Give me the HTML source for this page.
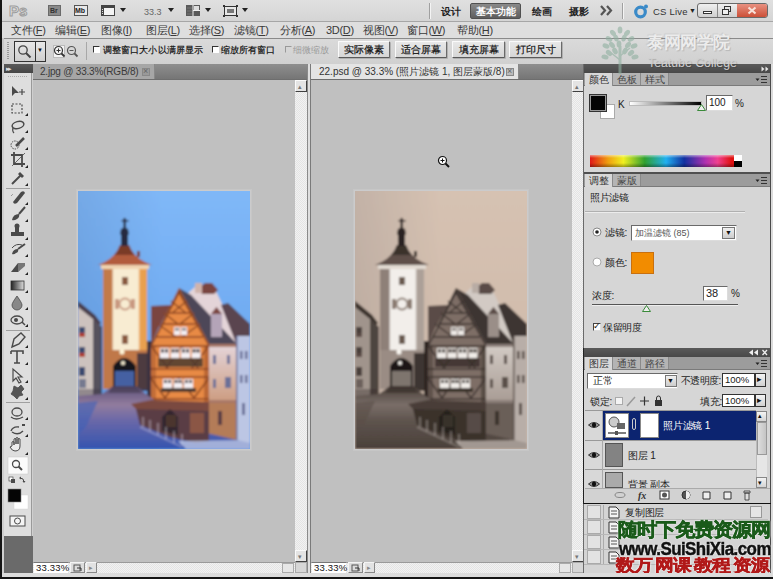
<!DOCTYPE html>
<html><head><meta charset="utf-8"><style>
*{margin:0;padding:0;box-sizing:border-box}
html,body{width:773px;height:579px;overflow:hidden;background:#c0c0c0;font-family:"Liberation Sans",sans-serif;font-size:11px;color:#1a1a1a}
.a{position:absolute}
.t{position:absolute;white-space:nowrap;line-height:12px}
.b{position:absolute;background:linear-gradient(#e8e8e8,#d6d6d6);border:1px solid #fafafa;border-right-color:#6a6a6a;border-bottom-color:#5a5a5a;box-shadow:1px 1px 0 #b0b0b0;border-radius:1px;text-align:center;font-size:10px;line-height:15px;color:#111;white-space:nowrap;-webkit-text-stroke:0.2px #111}
.tab{position:absolute;height:13px;line-height:13px;font-size:11px;text-align:center;color:#444;border-right:1px solid #8a8a8a}
.in{position:absolute;background:#fff;border:1px solid #6a6a6a;border-right-color:#dcdcdc;border-bottom-color:#dcdcdc;font-size:11px;line-height:12px;padding-left:2px;white-space:nowrap}
</style></head><body>
<div class="a" style="left:0px;top:0px;width:773px;height:22px;background:linear-gradient(#e0e0e0,#d4d4d4);"></div>
<div class="a" style="left:0px;top:21px;width:773px;height:1px;background:#a6a6a6;"></div>
<div class="t" style="left:9px;top:3px;font-size:15px;line-height:15px;color:#e2e2e2;-webkit-text-stroke:1px #9c9c9c;font-weight:bold;letter-spacing:0px">Ps</div>
<div class="a" style="left:48px;top:5px;width:13px;height:11px;background:#8a8a8a;border:1px solid #6a6a6a"></div>
<div class="t" style="left:50px;top:7px;font-size:7px;line-height:7px;color:#333;font-weight:bold">Br</div>
<div class="a" style="left:74px;top:5px;width:14px;height:11px;background:#e8e8e8;border:1px solid #555"></div>
<div class="t" style="left:75px;top:7px;font-size:7px;line-height:7px;color:#222;font-weight:bold">Mb</div>
<svg class="a" style="left:100px;top:5px" width="150" height="12" viewBox="100 5 150 12"><rect x="101.5" y="5.5" width="13" height="10" fill="#f4f4f4" stroke="#444"/><rect x="101" y="5" width="14" height="3" fill="#444"/><rect x="101" y="5" width="3" height="11" fill="#444"/><path d="M102 9.5h1M102 11.5h1M102 13.5h1" stroke="#ddd"/><path d="M120 8h6l-3 4z" fill="#222"/><path d="M168 8h6l-3 4z" fill="#222"/><rect x="186" y="5" width="14" height="11" fill="#5a5a5a"/><path d="M193 5v11M193 10.5h7" stroke="#f0f0f0"/><rect x="194" y="6" width="5" height="4" fill="#ddd"/><path d="M187 8h5M187 11h5M187 14h5" stroke="#888" stroke-width="0.6"/><path d="M205 8h6l-3 4z" fill="#222"/><rect x="224.5" y="6.5" width="12" height="9" fill="#e8e8e8" stroke="#333"/><rect x="227" y="9" width="7" height="4" fill="#777"/><path d="M223 5h2v2h-2zM236 5h2v2h-2zM223 15h2v2h-2zM236 15h2v2h-2z" fill="#333"/><path d="M242 8h6l-3 4z" fill="#222"/></svg>
<div class="t" style="left:144px;top:6px;font-size:9px;color:#666">33.3</div>
<div class="a" style="left:429px;top:3px;width:1px;height:16px;background:#a0a0a0;"></div>
<div class="a" style="left:430px;top:3px;width:1px;height:16px;background:#f4f4f4;"></div>
<div class="t" style="left:441px;top:6px;font-size:9.5px;font-weight:bold;color:#222">设计</div>
<div class="a" style="left:470px;top:3px;width:51px;height:16px;background:linear-gradient(#8a8a8a,#5e5e5e);border-radius:2px;border:1px solid #505050"></div>
<div class="t" style="left:476px;top:6px;font-size:9.5px;color:#fff;font-weight:bold">基本功能</div>
<div class="t" style="left:532px;top:6px;font-size:9.5px;font-weight:bold;color:#222">绘画</div>
<div class="t" style="left:569px;top:6px;font-size:9.5px;font-weight:bold;color:#222">摄影</div>
<svg class="a" style="left:600px;top:5px" width="13" height="11"><path d="M1 1 L5 5.5 L1 10 M7 1 L11 5.5 L7 10" fill="none" stroke="#555" stroke-width="2.2"/></svg>
<div class="a" style="left:622px;top:3px;width:1px;height:16px;background:#a0a0a0;"></div>
<div class="a" style="left:623px;top:3px;width:1px;height:16px;background:#f4f4f4;"></div>
<svg class="a" style="left:633px;top:3px" width="17" height="16" viewBox="0 0 17 16"><circle cx="7.5" cy="9" r="4.8" fill="none" stroke="#3a8ac8" stroke-width="3.2"/><circle cx="13" cy="3.5" r="2" fill="#3a8ac8"/></svg>
<div class="t" style="left:653px;top:6px;font-size:9.5px;color:#333;letter-spacing:0.2px">CS Live</div>
<div class="t" style="left:689px;top:7px;font-size:7px;line-height:8px;color:#222">&#9660;</div>
<div class="a" style="left:697px;top:3px;width:71px;height:15px;background:linear-gradient(#f0f0f0,#cfcfcf);border:1px solid #6a6a6a;border-radius:3px"></div>
<div class="a" style="left:717px;top:4px;width:1px;height:13px;background:#888;"></div>
<div class="a" style="left:737px;top:4px;width:1px;height:13px;background:#888;"></div>
<div class="a" style="left:737px;top:4px;width:30px;height:13px;background:linear-gradient(#e89080,#cc5038);border-radius:0 2px 2px 0"></div>
<div class="a" style="left:703px;top:11px;width:9px;height:3px;background:#fff;border:1px solid #333"></div>
<div class="a" style="left:724px;top:6px;width:7px;height:6px;background:none;border:1px solid #333"></div>
<div class="a" style="left:722px;top:9px;width:7px;height:6px;background:#eee;border:1px solid #333"></div>
<svg class="a" style="left:747px;top:6px" width="10" height="9"><path d="M1.5 1.5 L8.5 7.5 M8.5 1.5 L1.5 7.5" stroke="#f8e0d8" stroke-width="2.2"/></svg>
<div class="a" style="left:0px;top:22px;width:773px;height:17px;background:#dedede;"></div>
<div class="a" style="left:0px;top:38px;width:773px;height:1px;background:#8a8a8a;"></div>
<div class="t" style="left:11px;top:24px;font-size:11px;color:#3a3a3a;letter-spacing:-0.3px">文件(<u>F</u>)</div>
<div class="t" style="left:55px;top:24px;font-size:11px;color:#3a3a3a;letter-spacing:-0.3px">编辑(<u>E</u>)</div>
<div class="t" style="left:101px;top:24px;font-size:11px;color:#3a3a3a;letter-spacing:-0.3px">图像(<u>I</u>)</div>
<div class="t" style="left:146px;top:24px;font-size:11px;color:#3a3a3a;letter-spacing:-0.3px">图层(<u>L</u>)</div>
<div class="t" style="left:189px;top:24px;font-size:11px;color:#3a3a3a;letter-spacing:-0.3px">选择(<u>S</u>)</div>
<div class="t" style="left:234px;top:24px;font-size:11px;color:#3a3a3a;letter-spacing:-0.3px">滤镜(<u>T</u>)</div>
<div class="t" style="left:280px;top:24px;font-size:11px;color:#3a3a3a;letter-spacing:-0.3px">分析(<u>A</u>)</div>
<div class="t" style="left:326px;top:24px;font-size:11px;color:#3a3a3a;letter-spacing:-0.3px">3D(<u>D</u>)</div>
<div class="t" style="left:363px;top:24px;font-size:11px;color:#3a3a3a;letter-spacing:-0.3px">视图(<u>V</u>)</div>
<div class="t" style="left:407px;top:24px;font-size:11px;color:#3a3a3a;letter-spacing:-0.3px">窗口(<u>W</u>)</div>
<div class="t" style="left:457px;top:24px;font-size:11px;color:#3a3a3a;letter-spacing:-0.3px">帮助(<u>H</u>)</div>
<div class="a" style="left:0px;top:39px;width:773px;height:25px;background:linear-gradient(#dadada,#d0d0d0);"></div>
<div class="a" style="left:7px;top:42px;width:2px;height:18px;background:repeating-linear-gradient(#999 0 1px,transparent 1px 2px);"></div>
<div class="a" style="left:14px;top:41px;width:32px;height:21px;background:linear-gradient(#e8e8e8,#cfcfcf);border:1px solid #333"></div>
<div class="a" style="left:35px;top:41px;width:1px;height:21px;background:#333;"></div>
<svg class="a" style="left:17px;top:44px" width="15" height="15" viewBox="0 0 15 15"><circle cx="6" cy="6" r="4.2" fill="none" stroke="#444" stroke-width="1.3"/><line x1="9" y1="9" x2="13.5" y2="13.5" stroke="#444" stroke-width="2"/></svg>
<div class="t" style="left:37px;top:47px;font-size:6px;line-height:6px;color:#111">&#9660;</div>
<div class="a" style="left:86px;top:42px;width:1px;height:18px;background:#a8a8a8;"></div>
<div class="a" style="left:53px;top:45px;width:12px;height:13px;background:#f4f4f4;border:1px solid #bbb"></div>
<svg class="a" style="left:53px;top:45px" width="26" height="14" viewBox="0 0 26 14"><circle cx="5.5" cy="5.5" r="4" fill="none" stroke="#333" stroke-width="1.2"/><line x1="8.5" y1="8.5" x2="11.5" y2="11.5" stroke="#333" stroke-width="1.8"/><path d="M3.5 5.5h4M5.5 3.5v4" stroke="#333"/><circle cx="18.5" cy="5.5" r="4" fill="none" stroke="#555" stroke-width="1.2"/><line x1="21.5" y1="8.5" x2="24.5" y2="11.5" stroke="#555" stroke-width="1.8"/><path d="M16.5 5.5h4" stroke="#555"/></svg>
<div class="a" style="left:93px;top:46px;width:7px;height:7px;background:#fff;border:1px solid #333;border-right-color:transparent;border-bottom-color:transparent"></div>
<div class="t" style="left:103px;top:45px;font-size:9px;line-height:10px;color:#111;letter-spacing:0.1px;-webkit-text-stroke:0.2px #111">调整窗口大小以满屏显示</div>
<div class="a" style="left:212px;top:46px;width:7px;height:7px;background:#fff;border:1px solid #333;border-right-color:transparent;border-bottom-color:transparent"></div>
<div class="t" style="left:221px;top:45px;font-size:9px;line-height:10px;color:#111;letter-spacing:0.1px;-webkit-text-stroke:0.2px #111">缩放所有窗口</div>
<div class="a" style="left:285px;top:46px;width:7px;height:7px;background:transparent;border:1px solid #999;border-right-color:transparent;border-bottom-color:transparent"></div>
<div class="t" style="left:293px;top:45px;font-size:9px;line-height:10px;color:#9a9a9a;letter-spacing:0.1px">细微缩放</div>
<div class="b" style="left:338px;top:41px;width:52px;height:17px;">实际像素</div>
<div class="b" style="left:395px;top:41px;width:52px;height:17px;">适合屏幕</div>
<div class="b" style="left:452px;top:41px;width:53px;height:17px;">填充屏幕</div>
<div class="b" style="left:509px;top:41px;width:53px;height:17px;">打印尺寸</div>
<div class="a" style="left:0px;top:0px;width:2px;height:579px;background:#151515;"></div>
<div class="a" style="left:2px;top:38px;width:2px;height:538px;background:#c8c8c8;"></div>
<div class="a" style="left:2px;top:64px;width:31px;height:512px;background:#cfcfcf;"></div>
<div class="a" style="left:4px;top:64px;width:29px;height:9px;background:linear-gradient(#5a5a5a,#454545);"></div>
<div class="t" style="left:6px;top:65px;font-size:7px;line-height:7px;color:#ddd;letter-spacing:-2px">&#9656;&#9656;</div>
<div class="a" style="left:4px;top:73px;width:28px;height:463px;background:#dedede;border-right:1px solid #9a9a9a"></div>
<div class="a" style="left:8px;top:76px;width:20px;height:1px;background:repeating-linear-gradient(90deg,#aaa 0 1px,transparent 1px 2px);"></div>
<div class="a" style="left:4px;top:536px;width:29px;height:37px;background:#6a6a6a;"></div>
<div class="a" style="left:2px;top:573px;width:771px;height:4px;background:#dcdcdc;"></div>
<svg class="a" style="left:4px;top:73px" width="28" height="463" viewBox="4 73 28 463"><path d="M12 86 L12 96 L15 93 L19 93Z" fill="#4a4a4a"/><path d="M19 92h6M22 89v6" stroke="#4a4a4a" stroke-width="1.2"/><rect x="12" y="104" width="10" height="9" fill="none" stroke="#4a4a4a" stroke-width="1.2" stroke-dasharray="2 1.5"/><path d="M25 116 l3 0 l0 -3z" fill="#222"/><ellipse cx="18" cy="125" rx="6" ry="3.5" fill="none" stroke="#4a4a4a" stroke-width="1.5" transform="rotate(-15 18 125)"/><path d="M13 128 q-1 3 1 5" stroke="#4a4a4a" stroke-width="1.2" fill="none"/><path d="M25 133 l3 0 l0 -3z" fill="#222"/><circle cx="15" cy="145" r="4" fill="none" stroke="#4a4a4a" stroke-width="1" stroke-dasharray="1.5 1"/><path d="M16 146 L24 138" stroke="#4a4a4a" stroke-width="2.5"/><path d="M25 150 l3 0 l0 -3z" fill="#222"/><path d="M14 152 v12 h11 M11 155 h11 v12" fill="none" stroke="#4a4a4a" stroke-width="1.8"/><path d="M12 166 L25 153" stroke="#4a4a4a" stroke-width="0.8"/><path d="M25 168 l3 0 l0 -3z" fill="#222"/><path d="M12 184 L21 175" stroke="#4a4a4a" stroke-width="2"/><path d="M20 172 l4 4 l-2 2 l-4 -4z" fill="#4a4a4a"/><path d="M25 186 l3 0 l0 -3z" fill="#222"/><rect x="6" y="188" width="24" height="1" fill="#a0a0a0"/><path d="M13 202 L21 192 q3 -2 4 1 L17 203 q-3 2 -4 -1z" fill="#4a4a4a"/><path d="M11 196 l2 -2" stroke="#777" stroke-dasharray="1 1"/><path d="M25 205 l3 0 l0 -3z" fill="#222"/><path d="M19 214 L25 207" stroke="#4a4a4a" stroke-width="2"/><path d="M12 220 q1 -6 7 -6 q1 3 -2 5 q-3 2 -5 1z" fill="#4a4a4a"/><path d="M25 222 l3 0 l0 -3z" fill="#222"/><rect x="15" y="226" width="4" height="6" fill="#4a4a4a"/><circle cx="17" cy="226" r="2.5" fill="#4a4a4a"/><rect x="11" y="232" width="13" height="4" fill="#4a4a4a"/><path d="M25 240 l3 0 l0 -3z" fill="#222"/><path d="M12 254 q1 -5 6 -5 q1 3 -2 4 q-2 2 -4 1z" fill="#4a4a4a"/><path d="M18 249 L25 244" stroke="#4a4a4a" stroke-width="2"/><path d="M12 248 q4 -5 10 -3" stroke="#4a4a4a" fill="none"/><path d="M25 257 l3 0 l0 -3z" fill="#222"/><path d="M11 272 L18 263 L25 263 L18 272Z" fill="#4a4a4a"/><path d="M18 263 L25 263 L25 266 L18 272" fill="#777"/><path d="M25 275 l3 0 l0 -3z" fill="#222"/><defs><linearGradient id="tg" x1="0" x2="1"><stop offset="0" stop-color="#222"/><stop offset="1" stop-color="#ddd"/></linearGradient></defs><rect x="11" y="281" width="13" height="9" fill="url(#tg)" stroke="#333" stroke-width="0.8"/><path d="M25 293 l3 0 l0 -3z" fill="#222"/><path d="M17 296 q-5 7 -5 9 a5 5 0 0 0 10 0 q0 -2 -5 -9z" fill="#888" stroke="#4a4a4a" stroke-width="0.8"/><path d="M25 310 l3 0 l0 -3z" fill="#222"/><ellipse cx="17" cy="320" rx="6" ry="4" fill="none" stroke="#4a4a4a" stroke-width="1.3"/><circle cx="16" cy="320" r="2" fill="#4a4a4a"/><path d="M22 322 l3 3" stroke="#4a4a4a" stroke-width="1.5"/><path d="M25 327 l3 0 l0 -3z" fill="#222"/><rect x="6" y="330" width="24" height="1" fill="#a0a0a0"/><path d="M12 347 L14 339 L21 333 L25 337 L19 344Z" fill="none" stroke="#4a4a4a" stroke-width="1.4"/><path d="M25 348 l3 0 l0 -3z" fill="#222"/><path d="M11 351 h12 v3 M17 351 v12 M14 363 h6 M11 351 v3" fill="none" stroke="#4a4a4a" stroke-width="1.6"/><path d="M25 365 l3 0 l0 -3z" fill="#222"/><path d="M13 369 L13 381 L16 378 L19 383 L21 382 L18 377 L22 377Z" fill="none" stroke="#4a4a4a" stroke-width="1.2"/><path d="M25 383 l3 0 l0 -3z" fill="#222"/><path d="M14 386 l4 2 l3 -3 l3 4 l-3 3 l2 3 l-4 1 l-2 3 l-3 -3 l-3 -2 l2 -3z" fill="#555" stroke="#4a4a4a" stroke-width="0.8"/><path d="M25 400 l3 0 l0 -3z" fill="#222"/><rect x="6" y="402" width="24" height="1" fill="#a0a0a0"/><ellipse cx="17" cy="412" rx="5" ry="4" fill="none" stroke="#4a4a4a" stroke-width="1.3"/><path d="M11 417 q5 4 12 0" fill="none" stroke="#4a4a4a" stroke-width="1.3"/><path d="M25 420 l3 0 l0 -3z" fill="#222"/><path d="M11 431 q2 -5 8 -4 M12 432 q6 4 11 -1" fill="none" stroke="#4a4a4a" stroke-width="1.4"/><rect x="22" y="424" width="3" height="2" fill="#4a4a4a"/><path d="M25 437 l3 0 l0 -3z" fill="#222"/><path d="M12 446 v-4 q1 -1 2 0 v3 v-6 q1 -1 2 0 v5 v-6 q1 -1 2 0 v6 v-5 q1 -1 2 0 v7 q0 5 -5 5 q-3 0 -5 -4z" fill="#eee" stroke="#4a4a4a" stroke-width="1"/><path d="M25 455 l3 0 l0 -3z" fill="#222"/><rect x="8" y="457" width="20" height="17" fill="#fbfbfb" stroke="#c8c8c8" stroke-width="0.5"/><circle cx="16" cy="464" r="3.5" fill="none" stroke="#4a4a4a" stroke-width="1.3"/><path d="M18.5 466.5 L22 470" stroke="#4a4a4a" stroke-width="2"/><rect x="9" y="477" width="4" height="4" fill="#fff" stroke="#4a4a4a" stroke-width="0.7"/><rect x="11" y="479" width="4" height="4" fill="#4a4a4a"/><path d="M20 478 q4 0 4 4" fill="none" stroke="#4a4a4a" stroke-width="1"/><path d="M19 478 l2 -1.5 v3z M24 483 l-1.5 -2 h3z" fill="#4a4a4a"/><rect x="14" y="495" width="14" height="14" fill="#fff" stroke="#d8d8d8" stroke-width="0.5"/><rect x="8" y="489" width="13" height="13" fill="#050505" stroke="#888" stroke-width="0.6"/><rect x="10" y="516" width="15" height="10" fill="#f4f4f4" stroke="#4a4a4a" stroke-width="1"/><circle cx="17.5" cy="521" r="3" fill="none" stroke="#4a4a4a" stroke-width="1"/></svg>
<div class="a" style="left:33px;top:64px;width:274px;height:16px;background:linear-gradient(#8e8e8e,#747474);"></div><div class="a" style="left:33px;top:64px;width:122px;height:16px;background:#a6a6a6;border-right:1px solid #888"></div><div class="t" style="left:40px;top:66px;font-size:10px;color:#3a3a3a;letter-spacing:-0.2px">2.jpg @ 33.3%(RGB/8)</div><div class="a" style="left:142px;top:68px;width:8px;height:8px;background:#999;border:1px solid #888"></div><div class="t" style="left:143px;top:67px;font-size:9px;line-height:9px;color:#666">&#215;</div><div class="a" style="left:33px;top:79px;width:274px;height:1px;background:#6e6e6e;"></div><div class="a" style="left:33px;top:80px;width:262px;height:482px;background:#c0c0c0;"></div><div class="a" style="left:295px;top:80px;width:12px;height:482px;background:repeating-conic-gradient(#e4e4e4 0 25%,#f2f2f2 0 50%) 0 0/2px 2px;"></div><div class="a" style="left:295px;top:80px;width:12px;height:12px;background:#e4e4e4;border:1px solid;border-color:#fafafa #404040 #404040 #fafafa"></div><div class="t" style="left:298px;top:83px;font-size:7px;line-height:7px;color:#777">&#9652;</div><div class="a" style="left:295px;top:550px;width:12px;height:12px;background:#e4e4e4;border:1px solid;border-color:#fafafa #404040 #404040 #fafafa"></div><div class="t" style="left:298px;top:553px;font-size:7px;line-height:7px;color:#777">&#9662;</div><div class="a" style="left:33px;top:562px;width:274px;height:11px;background:repeating-conic-gradient(#e4e4e4 0 25%,#f2f2f2 0 50%) 0 0/2px 2px;"></div><div class="a" style="left:33px;top:562px;width:274px;height:1px;background:#9a9a9a;"></div><div class="a" style="left:34px;top:562px;width:34px;height:11px;background:#fff;border-top:1px solid #777"></div><div class="t" style="left:36px;top:563px;font-size:9.5px;line-height:10px;color:#111;letter-spacing:0.2px">33.33%</div><div class="a" style="left:70px;top:562px;width:15px;height:11px;background:#dcdcdc;border:1px solid;border-color:#f4f4f4 #888 #888 #f4f4f4"></div><svg class="a" style="left:73px;top:564px" width="9" height="8"><rect x="1" y="1" width="6" height="6" fill="none" stroke="#555"/><path d="M4 4h4v3" stroke="#333" fill="none"/></svg><div class="a" style="left:86px;top:562px;width:11px;height:11px;background:#e2e2e2;border:1px solid;border-color:#f4f4f4 #888 #888 #f4f4f4"></div><div class="t" style="left:89px;top:564px;font-size:7px;line-height:7px;color:#888">&#9656;</div><div class="a" style="left:282px;top:563px;width:12px;height:10px;background:#e6e6e6;border:1px solid #aaa"></div><div class="a" style="left:295px;top:562px;width:12px;height:11px;background:#d6d6d6;border:1px solid #aaa"></div><div class="a" style="left:76px;top:189px;width:176px;height:262px;background:#cbcbcc;border:1px solid #c6c6c6"></div><svg class="a" style="left:78px;top:191px" width="172" height="258" viewBox="0 0 172 258"><defs>
<linearGradient id="gcolorsky" x1="0" y1="0" x2="0" y2="1"><stop offset="0" stop-color="#80b8f8"/><stop offset="1" stop-color="#62a0ec"/></linearGradient>
<linearGradient id="gcolortw" x1="0" y1="0" x2="1" y2="0"><stop offset="0" stop-color="#c27a4a"/><stop offset="0.2" stop-color="#c27a4a"/><stop offset="0.24" stop-color="#f8ecd2"/><stop offset="0.8" stop-color="#f8ecd2"/><stop offset="0.84" stop-color="#e8a050"/><stop offset="1" stop-color="#e8a050"/></linearGradient>
<linearGradient id="gcolorfac" x1="0" y1="0" x2="0" y2="1"><stop offset="0" stop-color="#e4d4d8"/><stop offset="1" stop-color="#cc9c80"/></linearGradient>
<linearGradient id="gcolorskyh" x1="0" y1="0" x2="1" y2="0"><stop offset="0" stop-color="#102040" stop-opacity="0.10"/><stop offset="0.5" stop-color="#102040" stop-opacity="0"/></linearGradient>
<linearGradient id="gcolorst" x1="0" y1="0" x2="0" y2="1"><stop offset="0" stop-color="#5a5078"/><stop offset="0.3" stop-color="#927c9e"/><stop offset="0.55" stop-color="#6a68a8"/><stop offset="1" stop-color="#3454b0"/></linearGradient>
<filter id="gcolorbl"><feGaussianBlur stdDeviation="0.9"/></filter>
</defs>
<g filter="url(#gcolorbl)">
<rect x="-2" y="-2" width="176" height="262" fill="url(#gcolorsky)"/>
<rect x="-2" y="-2" width="176" height="262" fill="url(#gcolorskyh)"/>
<path d="M0 112 L16 126 L22 134 L22 212 L0 212Z" fill="#cdc2be"/>
<path d="M15 128 L24 136 L24 212 L15 212Z" fill="#3a3444" opacity="0.8"/>
<path d="M0 110 L17 124 L23 132 L21 134 L15 128 L0 116Z" fill="#4a3c4c"/>
<rect x="1" y="136" width="6" height="9" fill="#3a4870"/><rect x="1" y="142" width="6" height="4" fill="#b04030"/>
<rect x="1" y="156" width="6" height="9" fill="#3a4870"/><rect x="1" y="162" width="6" height="4" fill="#b04030"/>
<rect x="1" y="176" width="6" height="9" fill="#3a4870"/>
<rect x="1" y="188" width="7" height="9" fill="#3a4870" opacity="0.6"/>
<rect x="0" y="198" width="22" height="14" fill="#3a3444" opacity="0.4"/>
<rect x="25" y="76" width="44" height="122" fill="url(#gcolortw)"/>
<rect x="25" y="159" width="44" height="39" fill="#c07848"/>
<rect x="59" y="162" width="14" height="38" fill="#3a3040" opacity="0.85"/>
<rect x="23" y="73" width="48" height="5" fill="#f0d4b0"/>
<path d="M42 54 L51 54 Q56 68 74 74 L20 74 Q37 68 42 54Z" fill="#b25c3c"/>
<path d="M42 54 L51 54 Q53 60 57 64 L36 64 Q40 60 42 54Z" fill="#7a3a28"/>
<path d="M43 55 L43 44 L42 43 L43 38 Q46.5 35 50 38 L51 43 L50 44 L50 55Z" fill="#262c40"/>
<rect x="45.5" y="27" width="2.5" height="11" fill="#262c40"/>
<rect x="43.5" y="29" width="7" height="1.5" fill="#262c40"/>
<rect x="59" y="60" width="3" height="6" fill="#7a3a28"/>
<rect x="44" y="86" width="6" height="8" fill="#8a5a40"/>
<rect x="37" y="108" width="4" height="10" fill="#c89880"/>
<rect x="53" y="108" width="4" height="10" fill="#c89880"/>
<circle cx="47" cy="113" r="5.5" fill="#f8ecd2" stroke="#c89880" stroke-width="1.8"/>
<rect x="44" y="144" width="6" height="9" fill="#8a5a40"/>
<path d="M35 195 L35 175 Q46 159 58 175 L58 195Z" fill="#18181e"/>
<path d="M37 195 L37 180 L56 180 L56 195Z" fill="#4a68b0" opacity="0.9"/>
<circle cx="44" cy="161" r="2.5" fill="#fff6d8"/>
<circle cx="45" cy="172" r="2" fill="#fff6d8"/>
<path d="M108 104 L118 95 L136 96 L158 142 L158 258 L128 258 L128 150Z" fill="#e4d4d8"/>
<path d="M121 97 L127 92 L134 92 L140 99 L136 103 L124 103Z" fill="#7a4440"/>
<rect x="117" y="92" width="7" height="10" fill="#d0b4ac"/>
<path d="M143 114 L150 112 L172 133 L172 152 L158 152Z" fill="#5a4450"/>
<rect x="158" y="145" width="14" height="113" fill="#bcc6e4"/>
<rect x="158" y="145" width="1.5" height="113" fill="#6a7098"/>
<rect x="162" y="160" width="2.5" height="8" fill="#6a7098"/>
<rect x="167" y="160" width="2.5" height="8" fill="#6a7098"/>
<rect x="162" y="184" width="2.5" height="8" fill="#6a7098"/>
<rect x="167" y="184" width="2.5" height="8" fill="#6a7098"/>
<rect x="164" y="212" width="3" height="12" fill="#6a7098"/>
<path d="M101 97 L113 104 L158 152 L158 157 L131 156 L131 153Z" fill="#4e4658"/>
<path d="M133 123 L138.5 116 L144 123 L144 146 L133 146Z" fill="#b4a4b8"/>
<path d="M133 123 L138.5 116 L144 123Z" fill="#7a4440"/>
<path d="M73 115 L93 114 L80 138 L73 154Z" fill="#7a4440"/>
<rect x="69" y="150" width="5" height="62" fill="#3a3040"/>
<path d="M101 97 L131 153 L131 211 L73 211 L73 154Z" fill="#e88a44"/>
<rect x="73" y="154" width="5" height="57" fill="#a85a30" opacity="0.6"/>
<rect x="126" y="154" width="5" height="57" fill="#a85a30" opacity="0.7"/>
<path d="M101 97 L131 153 L131 156 L101 103 L73 157 L73 154Z" fill="#8a4420"/>
<g stroke="#8a4420" stroke-width="1.5" fill="none">
<path d="M89 122 L113 122 M83 133 L119 133 M78 146 L125 146 M73 155 L131 155 M73 178 L131 178 M73 186 L131 186 M73 208 L131 208"/>
<path d="M93 110 L108 122 M109 110 L94 122 M86 122 L100 133 M116 122 L102 133 M80 133 L98 146 M122 133 L104 146 M74 156 L90 177 M104 156 L88 177 M104 156 L120 177 M130 156 L114 177 M73 187 L87 207 M101 187 L87 207 M101 187 L116 207 M131 187 L116 207"/>
</g>
<rect x="96" y="136" width="6" height="8" fill="#f4f0f4"/><rect x="97" y="137" width="1.5" height="2.5" fill="#4a3a3a"/><rect x="99.5" y="137" width="1.5" height="2.5" fill="#4a3a3a"/><rect x="103" y="136" width="6" height="8" fill="#f4f0f4"/><rect x="104" y="137" width="1.5" height="2.5" fill="#4a3a3a"/><rect x="106.5" y="137" width="1.5" height="2.5" fill="#4a3a3a"/><rect x="82.0" y="157" width="9" height="10" fill="#f4f0f4"/><rect x="83.0" y="158" width="3.0" height="3.5" fill="#4a3a3a"/><rect x="87.0" y="158" width="3.0" height="3.5" fill="#4a3a3a"/><rect x="92.5" y="157" width="9" height="10" fill="#f4f0f4"/><rect x="93.5" y="158" width="3.0" height="3.5" fill="#4a3a3a"/><rect x="97.5" y="158" width="3.0" height="3.5" fill="#4a3a3a"/><rect x="103.0" y="157" width="9" height="10" fill="#f4f0f4"/><rect x="104.0" y="158" width="3.0" height="3.5" fill="#4a3a3a"/><rect x="108.0" y="158" width="3.0" height="3.5" fill="#4a3a3a"/><rect x="113.5" y="157" width="9" height="10" fill="#f4f0f4"/><rect x="114.5" y="158" width="3.0" height="3.5" fill="#4a3a3a"/><rect x="118.5" y="158" width="3.0" height="3.5" fill="#4a3a3a"/>
<rect x="80" y="167" width="45" height="9" fill="#4a3a30" opacity="0.85"/>
<rect x="85.0" y="188" width="9" height="9" fill="#f4f0f4"/><rect x="86.0" y="189" width="3.0" height="3.0" fill="#4a3a3a"/><rect x="90.0" y="189" width="3.0" height="3.0" fill="#4a3a3a"/><rect x="95.5" y="188" width="9" height="9" fill="#f4f0f4"/><rect x="96.5" y="189" width="3.0" height="3.0" fill="#4a3a3a"/><rect x="100.5" y="189" width="3.0" height="3.0" fill="#4a3a3a"/><rect x="106.0" y="188" width="9" height="9" fill="#f4f0f4"/><rect x="107.0" y="189" width="3.0" height="3.0" fill="#4a3a3a"/><rect x="111.0" y="189" width="3.0" height="3.0" fill="#4a3a3a"/>
<rect x="83" y="197" width="35" height="4" fill="#4a3a30"/>
<rect x="131" y="155" width="27" height="56" fill="url(#gcolorfac)"/>
<rect x="131" y="153" width="27" height="3" fill="#a87868"/>
<rect x="135" y="164" width="3" height="9" fill="#6a7098"/>
<rect x="149" y="164" width="3" height="9" fill="#6a7098"/>
<rect x="135" y="188" width="3" height="9" fill="#6a7098"/>
<rect x="147" y="186" width="6" height="11" fill="#6a7098"/>
<rect x="131" y="209" width="27" height="3" fill="#a87868"/>
<rect x="131" y="212" width="27" height="46" fill="#b47c58"/>
<rect x="140" y="220" width="4" height="14" fill="#5a3c44"/>
<path d="M0 205 L24 203 L35 195 L58 195 L72 206 L95 222 L120 240 L172 252 L172 258 L0 258Z" fill="url(#gcolorst)"/>
<path d="M0 212 L20 210 L8 236 L0 244Z" fill="#4060b8" opacity="0.6"/>
<path d="M35 195 L58 195 L64 202 L30 202Z" fill="#3a3040" opacity="0.5"/>
<path d="M53 213 L73 209 L131 211 L131 220 L100 222 L60 220Z" fill="#7a4a40"/>
<path d="M58 218 L131 220 L131 250 L118 252 L92 246 L62 234Z" fill="#5a3c44"/>
<rect x="88" y="224" width="10" height="12" fill="#c87848" opacity="0.6"/>
<rect x="112" y="222" width="14" height="20" fill="#c87848" opacity="0.45"/>
<path d="M84 226 L92 218 L100 226 L100 244 L84 240Z" fill="#18181e" opacity="0.6"/>
<path d="M65 226v10M72 229v11M80 232v12M88 236v12M96 240v12M104 243v11" stroke="#e0d8e8" stroke-width="1.2" opacity="0.6"/>
<path d="M62 236 L104 256" stroke="#e0d8e8" stroke-width="1.5" opacity="0.35"/>
<path d="M100 250 L172 249 L172 258 L108 258Z" fill="#bcc6e4" opacity="0.8"/>
</g>
</svg>
<div class="a" style="left:307px;top:64px;width:4px;height:512px;background:#dedede;border-left:1px solid #8a8a8a;border-right:1px solid #7a7a7a"></div>
<div class="a" style="left:311px;top:64px;width:273px;height:16px;background:linear-gradient(#8e8e8e,#747474);"></div><div class="a" style="left:311px;top:64px;width:208px;height:16px;background:#e4e4e4;border-right:1px solid #888"></div><div class="t" style="left:319px;top:66px;font-size:10px;color:#333;letter-spacing:0px">22.psd @ 33.3% (照片滤镜 1, 图层蒙版/8)</div><div class="a" style="left:506px;top:68px;width:8px;height:8px;background:#bbb;border:1px solid #888"></div><div class="t" style="left:507px;top:67px;font-size:9px;line-height:9px;color:#666">&#215;</div><div class="a" style="left:311px;top:79px;width:273px;height:1px;background:#6e6e6e;"></div><div class="a" style="left:311px;top:80px;width:261px;height:482px;background:#c0c0c0;"></div><div class="a" style="left:572px;top:80px;width:12px;height:482px;background:repeating-conic-gradient(#e4e4e4 0 25%,#f2f2f2 0 50%) 0 0/2px 2px;"></div><div class="a" style="left:572px;top:80px;width:12px;height:12px;background:#e4e4e4;border:1px solid;border-color:#fafafa #404040 #404040 #fafafa"></div><div class="t" style="left:575px;top:83px;font-size:7px;line-height:7px;color:#777">&#9652;</div><div class="a" style="left:572px;top:550px;width:12px;height:12px;background:#e4e4e4;border:1px solid;border-color:#fafafa #404040 #404040 #fafafa"></div><div class="t" style="left:575px;top:553px;font-size:7px;line-height:7px;color:#777">&#9662;</div><div class="a" style="left:311px;top:562px;width:273px;height:11px;background:repeating-conic-gradient(#e4e4e4 0 25%,#f2f2f2 0 50%) 0 0/2px 2px;"></div><div class="a" style="left:311px;top:562px;width:273px;height:1px;background:#9a9a9a;"></div><div class="a" style="left:312px;top:562px;width:34px;height:11px;background:#fff;border-top:1px solid #777"></div><div class="t" style="left:314px;top:563px;font-size:9.5px;line-height:10px;color:#111;letter-spacing:0.2px">33.33%</div><div class="a" style="left:348px;top:562px;width:15px;height:11px;background:#dcdcdc;border:1px solid;border-color:#f4f4f4 #888 #888 #f4f4f4"></div><svg class="a" style="left:351px;top:564px" width="9" height="8"><rect x="1" y="1" width="6" height="6" fill="none" stroke="#555"/><path d="M4 4h4v3" stroke="#333" fill="none"/></svg><div class="a" style="left:364px;top:562px;width:11px;height:11px;background:#e2e2e2;border:1px solid;border-color:#f4f4f4 #888 #888 #f4f4f4"></div><div class="t" style="left:367px;top:564px;font-size:7px;line-height:7px;color:#888">&#9656;</div><div class="a" style="left:559px;top:563px;width:12px;height:10px;background:#e6e6e6;border:1px solid #aaa"></div><div class="a" style="left:572px;top:562px;width:12px;height:11px;background:#d6d6d6;border:1px solid #aaa"></div><div class="a" style="left:353px;top:189px;width:176px;height:262px;background:#cbcbcc;border:1px solid #c6c6c6"></div><svg class="a" style="left:355px;top:191px" width="172" height="258" viewBox="0 0 172 258"><defs>
<linearGradient id="gsepiasky" x1="0" y1="0" x2="0" y2="1"><stop offset="0" stop-color="#d6c2b2"/><stop offset="1" stop-color="#cdb8a8"/></linearGradient>
<linearGradient id="gsepiatw" x1="0" y1="0" x2="1" y2="0"><stop offset="0" stop-color="#8e8078"/><stop offset="0.2" stop-color="#8e8078"/><stop offset="0.24" stop-color="#f2eeea"/><stop offset="0.8" stop-color="#f2eeea"/><stop offset="0.84" stop-color="#aca098"/><stop offset="1" stop-color="#aca098"/></linearGradient>
<linearGradient id="gsepiafac" x1="0" y1="0" x2="0" y2="1"><stop offset="0" stop-color="#d2cac4"/><stop offset="1" stop-color="#a89c94"/></linearGradient>
<linearGradient id="gsepiaskyh" x1="0" y1="0" x2="1" y2="0"><stop offset="0" stop-color="#102040" stop-opacity="0.10"/><stop offset="0.5" stop-color="#102040" stop-opacity="0"/></linearGradient>
<linearGradient id="gsepiast" x1="0" y1="0" x2="0" y2="1"><stop offset="0" stop-color="#4a403a"/><stop offset="0.3" stop-color="#7a6e68"/><stop offset="0.55" stop-color="#5e544e"/><stop offset="1" stop-color="#4a403a"/></linearGradient>
<filter id="gsepiabl"><feGaussianBlur stdDeviation="0.9"/></filter>
</defs>
<g filter="url(#gsepiabl)">
<rect x="-2" y="-2" width="176" height="262" fill="url(#gsepiasky)"/>
<rect x="-2" y="-2" width="176" height="262" fill="url(#gsepiaskyh)"/>
<path d="M0 112 L16 126 L22 134 L22 212 L0 212Z" fill="#a0948c"/>
<path d="M15 128 L24 136 L24 212 L15 212Z" fill="#3a302c" opacity="0.8"/>
<path d="M0 110 L17 124 L23 132 L21 134 L15 128 L0 116Z" fill="#3a302c"/>
<rect x="1" y="136" width="6" height="9" fill="#4a403a"/><rect x="1" y="142" width="6" height="4" fill="#5a4a44"/>
<rect x="1" y="156" width="6" height="9" fill="#4a403a"/><rect x="1" y="162" width="6" height="4" fill="#5a4a44"/>
<rect x="1" y="176" width="6" height="9" fill="#4a403a"/>
<rect x="1" y="188" width="7" height="9" fill="#4a403a" opacity="0.6"/>
<rect x="0" y="198" width="22" height="14" fill="#3a302c" opacity="0.4"/>
<rect x="25" y="76" width="44" height="122" fill="url(#gsepiatw)"/>
<rect x="25" y="159" width="44" height="39" fill="#9a8c84"/>
<rect x="59" y="162" width="14" height="38" fill="#2e2622" opacity="0.85"/>
<rect x="23" y="73" width="48" height="5" fill="#e2dad2"/>
<path d="M42 54 L51 54 Q56 68 74 74 L20 74 Q37 68 42 54Z" fill="#5e504a"/>
<path d="M42 54 L51 54 Q53 60 57 64 L36 64 Q40 60 42 54Z" fill="#3a302c"/>
<path d="M43 55 L43 44 L42 43 L43 38 Q46.5 35 50 38 L51 43 L50 44 L50 55Z" fill="#2a2420"/>
<rect x="45.5" y="27" width="2.5" height="11" fill="#2a2420"/>
<rect x="43.5" y="29" width="7" height="1.5" fill="#2a2420"/>
<rect x="59" y="60" width="3" height="6" fill="#3a302c"/>
<rect x="44" y="86" width="6" height="8" fill="#6a5a50"/>
<rect x="37" y="108" width="4" height="10" fill="#8a7a70"/>
<rect x="53" y="108" width="4" height="10" fill="#8a7a70"/>
<circle cx="47" cy="113" r="5.5" fill="#f2eeea" stroke="#8a7a70" stroke-width="1.8"/>
<rect x="44" y="144" width="6" height="9" fill="#6a5a50"/>
<path d="M35 195 L35 175 Q46 159 58 175 L58 195Z" fill="#1c1814"/>
<path d="M37 195 L37 180 L56 180 L56 195Z" fill="#8a8078" opacity="0.9"/>
<circle cx="44" cy="161" r="2.5" fill="#fbf8f2"/>
<circle cx="45" cy="172" r="2" fill="#fbf8f2"/>
<path d="M108 104 L118 95 L136 96 L158 142 L158 258 L128 258 L128 150Z" fill="#d2cac4"/>
<path d="M121 97 L127 92 L134 92 L140 99 L136 103 L124 103Z" fill="#5a4c46"/>
<rect x="117" y="92" width="7" height="10" fill="#b8aca4"/>
<path d="M143 114 L150 112 L172 133 L172 152 L158 152Z" fill="#3e3430"/>
<rect x="158" y="145" width="14" height="113" fill="#b8aea8"/>
<rect x="158" y="145" width="1.5" height="113" fill="#5a504a"/>
<rect x="162" y="160" width="2.5" height="8" fill="#5a504a"/>
<rect x="167" y="160" width="2.5" height="8" fill="#5a504a"/>
<rect x="162" y="184" width="2.5" height="8" fill="#5a504a"/>
<rect x="167" y="184" width="2.5" height="8" fill="#5a504a"/>
<rect x="164" y="212" width="3" height="12" fill="#5a504a"/>
<path d="M101 97 L113 104 L158 152 L158 157 L131 156 L131 153Z" fill="#3e3430"/>
<path d="M133 123 L138.5 116 L144 123 L144 146 L133 146Z" fill="#9a8e88"/>
<path d="M133 123 L138.5 116 L144 123Z" fill="#5a4c46"/>
<path d="M73 115 L93 114 L80 138 L73 154Z" fill="#5a4c46"/>
<rect x="69" y="150" width="5" height="62" fill="#2e2622"/>
<path d="M101 97 L131 153 L131 211 L73 211 L73 154Z" fill="#7e6e66"/>
<rect x="73" y="154" width="5" height="57" fill="#4a3e38" opacity="0.6"/>
<rect x="126" y="154" width="5" height="57" fill="#4a3e38" opacity="0.7"/>
<path d="M101 97 L131 153 L131 156 L101 103 L73 157 L73 154Z" fill="#3e3430"/>
<g stroke="#3e3430" stroke-width="1.5" fill="none">
<path d="M89 122 L113 122 M83 133 L119 133 M78 146 L125 146 M73 155 L131 155 M73 178 L131 178 M73 186 L131 186 M73 208 L131 208"/>
<path d="M93 110 L108 122 M109 110 L94 122 M86 122 L100 133 M116 122 L102 133 M80 133 L98 146 M122 133 L104 146 M74 156 L90 177 M104 156 L88 177 M104 156 L120 177 M130 156 L114 177 M73 187 L87 207 M101 187 L87 207 M101 187 L116 207 M131 187 L116 207"/>
</g>
<rect x="96" y="136" width="6" height="8" fill="#f0ece8"/><rect x="97" y="137" width="1.5" height="2.5" fill="#3a302c"/><rect x="99.5" y="137" width="1.5" height="2.5" fill="#3a302c"/><rect x="103" y="136" width="6" height="8" fill="#f0ece8"/><rect x="104" y="137" width="1.5" height="2.5" fill="#3a302c"/><rect x="106.5" y="137" width="1.5" height="2.5" fill="#3a302c"/><rect x="82.0" y="157" width="9" height="10" fill="#f0ece8"/><rect x="83.0" y="158" width="3.0" height="3.5" fill="#3a302c"/><rect x="87.0" y="158" width="3.0" height="3.5" fill="#3a302c"/><rect x="92.5" y="157" width="9" height="10" fill="#f0ece8"/><rect x="93.5" y="158" width="3.0" height="3.5" fill="#3a302c"/><rect x="97.5" y="158" width="3.0" height="3.5" fill="#3a302c"/><rect x="103.0" y="157" width="9" height="10" fill="#f0ece8"/><rect x="104.0" y="158" width="3.0" height="3.5" fill="#3a302c"/><rect x="108.0" y="158" width="3.0" height="3.5" fill="#3a302c"/><rect x="113.5" y="157" width="9" height="10" fill="#f0ece8"/><rect x="114.5" y="158" width="3.0" height="3.5" fill="#3a302c"/><rect x="118.5" y="158" width="3.0" height="3.5" fill="#3a302c"/>
<rect x="80" y="167" width="45" height="9" fill="#3a302c" opacity="0.85"/>
<rect x="85.0" y="188" width="9" height="9" fill="#f0ece8"/><rect x="86.0" y="189" width="3.0" height="3.0" fill="#3a302c"/><rect x="90.0" y="189" width="3.0" height="3.0" fill="#3a302c"/><rect x="95.5" y="188" width="9" height="9" fill="#f0ece8"/><rect x="96.5" y="189" width="3.0" height="3.0" fill="#3a302c"/><rect x="100.5" y="189" width="3.0" height="3.0" fill="#3a302c"/><rect x="106.0" y="188" width="9" height="9" fill="#f0ece8"/><rect x="107.0" y="189" width="3.0" height="3.0" fill="#3a302c"/><rect x="111.0" y="189" width="3.0" height="3.0" fill="#3a302c"/>
<rect x="83" y="197" width="35" height="4" fill="#3a302c"/>
<rect x="131" y="155" width="27" height="56" fill="url(#gsepiafac)"/>
<rect x="131" y="153" width="27" height="3" fill="#8a7e78"/>
<rect x="135" y="164" width="3" height="9" fill="#5a504a"/>
<rect x="149" y="164" width="3" height="9" fill="#5a504a"/>
<rect x="135" y="188" width="3" height="9" fill="#5a504a"/>
<rect x="147" y="186" width="6" height="11" fill="#5a504a"/>
<rect x="131" y="209" width="27" height="3" fill="#8a7e78"/>
<rect x="131" y="212" width="27" height="46" fill="#6a5e58"/>
<rect x="140" y="220" width="4" height="14" fill="#3a302c"/>
<path d="M0 205 L24 203 L35 195 L58 195 L72 206 L95 222 L120 240 L172 252 L172 258 L0 258Z" fill="url(#gsepiast)"/>
<path d="M0 212 L20 210 L8 236 L0 244Z" fill="#5a4e48" opacity="0.6"/>
<path d="M35 195 L58 195 L64 202 L30 202Z" fill="#2e2622" opacity="0.5"/>
<path d="M53 213 L73 209 L131 211 L131 220 L100 222 L60 220Z" fill="#4a3e38"/>
<path d="M58 218 L131 220 L131 250 L118 252 L92 246 L62 234Z" fill="#3a302c"/>
<rect x="88" y="224" width="10" height="12" fill="#7a6e68" opacity="0.6"/>
<rect x="112" y="222" width="14" height="20" fill="#7a6e68" opacity="0.45"/>
<path d="M84 226 L92 218 L100 226 L100 244 L84 240Z" fill="#1c1814" opacity="0.6"/>
<path d="M65 226v10M72 229v11M80 232v12M88 236v12M96 240v12M104 243v11" stroke="#cfc6c0" stroke-width="1.2" opacity="0.6"/>
<path d="M62 236 L104 256" stroke="#cfc6c0" stroke-width="1.5" opacity="0.35"/>
<path d="M100 250 L172 249 L172 258 L108 258Z" fill="#b8aea8" opacity="0.8"/>
</g>
</svg>
<svg class="a" style="left:437px;top:155px" width="14" height="14" viewBox="0 0 14 14"><circle cx="5.5" cy="5.5" r="4" fill="#fff" stroke="#111" stroke-width="1.2"/><path d="M3.5 5.5h4M5.5 3.5v4" stroke="#111"/><line x1="8.5" y1="8.5" x2="12" y2="12" stroke="#111" stroke-width="2"/></svg>
<div class="a" style="left:584px;top:64px;width:189px;height:512px;background:#d4d4d4;"></div><div class="a" style="left:583px;top:64px;width:1px;height:512px;background:#6a6a6a;"></div><div class="a" style="left:770px;top:64px;width:1px;height:512px;background:#4a4a4a;"></div><div class="a" style="left:771px;top:64px;width:2px;height:512px;background:#dcdcdc;"></div><div class="a" style="left:584px;top:64px;width:186px;height:9px;background:linear-gradient(#5a5a5a,#484848);"></div><svg class="a" style="left:761px;top:66px" width="8" height="6"><path d="M0.5 0.5v5l3-2.5zM4.5 0.5v5l3-2.5z" fill="#e8e8e8"/></svg><div class="a" style="left:584px;top:73px;width:186px;height:13px;background:#9c9c9c;border-bottom:1px solid #7a7a7a"></div><div class="a" style="left:585px;top:73px;width:28px;height:13px;background:#d8d8d8;border-right:1px solid #8a8a8a"></div><div class="t" style="left:589px;top:74px;font-size:10px;line-height:12px;color:#333;letter-spacing:0px">颜色</div><div class="a" style="left:613px;top:73px;width:28px;height:12px;background:#b4b4b4;border-right:1px solid #8a8a8a"></div><div class="t" style="left:617px;top:74px;font-size:10px;line-height:12px;color:#444;letter-spacing:0px">色板</div><div class="a" style="left:641px;top:73px;width:28px;height:12px;background:#b4b4b4;border-right:1px solid #8a8a8a"></div><div class="t" style="left:645px;top:74px;font-size:10px;line-height:12px;color:#444;letter-spacing:0px">样式</div><svg class="a" style="left:755px;top:75px" width="13" height="9"><path d="M0.5 3.5h4l-2 2.5z" fill="#222"/><path d="M6 1.5h6M6 4.5h6M6 7.5h6" stroke="#333" stroke-width="1.2"/></svg><div class="a" style="left:584px;top:86px;width:186px;height:86px;background:#d6d6d6;"></div><div class="a" style="left:600px;top:104px;width:15px;height:15px;background:#fff;border:1px solid #aaa"></div><div class="a" style="left:590px;top:95px;width:16px;height:16px;background:#050505;border:1px solid #999;outline:1px solid #333"></div><div class="t" style="left:618px;top:100px;font-size:10px;line-height:10px;color:#222">K</div><div class="a" style="left:629px;top:101px;width:73px;height:5px;background:linear-gradient(90deg,#fff,#000);border:1px solid #bbb"></div><svg class="a" style="left:697px;top:104px" width="9" height="7"><path d="M4.5 0.5 L8.5 6.5 L0.5 6.5Z" fill="#eee" stroke="#3a8a3a"/></svg><div class="in" style="left:706px;top:95px;width:27px;height:16px;line-height:14px;font-size:10px">100</div><div class="t" style="left:735px;top:99px;font-size:10px;line-height:10px;color:#222">%</div><div class="a" style="left:590px;top:155px;width:152px;height:12px;background:linear-gradient(90deg,#e01818 0%,#f0a010 12%,#f0f020 22%,#30a030 36%,#20b0f0 50%,#1030a0 62%,#b030b0 76%,#f04090 84%,#e01010 93%,#e01010 100%);"></div><div class="a" style="left:590px;top:155px;width:152px;height:3px;background:linear-gradient(rgba(255,255,255,.5),rgba(255,255,255,0));"></div><div class="a" style="left:590px;top:163px;width:152px;height:4px;background:linear-gradient(rgba(0,0,0,0),rgba(0,0,0,.35));"></div><div class="a" style="left:734px;top:155px;width:8px;height:6px;background:#fff;"></div><div class="a" style="left:734px;top:161px;width:8px;height:6px;background:#000;"></div><div class="a" style="left:584px;top:172px;width:186px;height:2px;background:#505050;"></div><div class="a" style="left:584px;top:174px;width:186px;height:13px;background:#9c9c9c;border-bottom:1px solid #7a7a7a"></div><div class="a" style="left:585px;top:174px;width:28px;height:13px;background:#d8d8d8;border-right:1px solid #8a8a8a"></div><div class="t" style="left:589px;top:175px;font-size:10px;line-height:12px;color:#333;letter-spacing:0px">调整</div><div class="a" style="left:613px;top:174px;width:28px;height:12px;background:#b4b4b4;border-right:1px solid #8a8a8a"></div><div class="t" style="left:617px;top:175px;font-size:10px;line-height:12px;color:#444;letter-spacing:0px">蒙版</div><svg class="a" style="left:755px;top:176px" width="13" height="9"><path d="M0.5 3.5h4l-2 2.5z" fill="#222"/><path d="M6 1.5h6M6 4.5h6M6 7.5h6" stroke="#333" stroke-width="1.2"/></svg><div class="a" style="left:584px;top:187px;width:186px;height:161px;background:#d6d6d6;"></div><div class="t" style="left:590px;top:192px;font-size:10px;line-height:12px;color:#222;letter-spacing:-0.3px">照片滤镜</div><div class="a" style="left:585px;top:211px;width:160px;height:1px;background:#b0b0b0;"></div><div class="a" style="left:585px;top:212px;width:160px;height:1px;background:#ececec;"></div><svg class="a" style="left:592px;top:227px" width="10" height="10"><circle cx="5" cy="5" r="4" fill="#fff" stroke="#888"/><circle cx="5" cy="5" r="1.8" fill="#222"/></svg><div class="t" style="left:605px;top:227px;font-size:10px;line-height:12px;color:#222;letter-spacing:-0.3px">滤镜:</div><div class="in" style="left:631px;top:225px;width:106px;height:16px;line-height:14px;color:#555;font-size:9px;padding-left:3px">加温滤镜 (85)</div><div class="a" style="left:722px;top:227px;width:13px;height:12px;background:linear-gradient(#f0f0f0,#cccccc);border:1px solid #777"></div><div class="t" style="left:725px;top:229px;font-size:7px;line-height:8px;color:#111">&#9660;</div><svg class="a" style="left:592px;top:257px" width="10" height="10"><circle cx="5" cy="5" r="4" fill="#fff" stroke="#aaa"/></svg><div class="t" style="left:605px;top:257px;font-size:10px;line-height:12px;color:#222;letter-spacing:-0.3px">颜色:</div><div class="a" style="left:631px;top:252px;width:23px;height:22px;background:#f28c00;border:1px solid #c87010"></div><div class="t" style="left:592px;top:290px;font-size:10px;line-height:12px;color:#222;letter-spacing:-0.3px">浓度:</div><div class="in" style="left:703px;top:286px;width:25px;height:15px;line-height:13px">38</div><div class="t" style="left:731px;top:289px;font-size:10px;line-height:10px;color:#222">%</div><div class="a" style="left:592px;top:304px;width:146px;height:1px;background:#555;"></div><div class="a" style="left:592px;top:305px;width:146px;height:1px;background:#eee;"></div><svg class="a" style="left:642px;top:305px" width="9" height="7"><path d="M4.5 0.5 L8.5 6.5 L0.5 6.5Z" fill="#eee" stroke="#3a8a3a"/></svg><div class="a" style="left:593px;top:323px;width:8px;height:8px;background:#fff;border:1px solid #444;border-right-color:#ddd;border-bottom-color:#ddd"></div><div class="t" style="left:593px;top:321px;font-size:9px;line-height:10px;color:#222">&#10003;</div><div class="t" style="left:603px;top:322px;font-size:10px;line-height:12px;color:#222;letter-spacing:-0.3px">保留明度</div><div class="a" style="left:584px;top:348px;width:186px;height:9px;background:linear-gradient(#5a5a5a,#484848);"></div><svg class="a" style="left:748px;top:349px" width="20" height="7"><path d="M5 0.5v6l-4-3zM10 0.5v6l-4-3z" fill="#eee"/><path d="M14.5 1l4.5 5M19 1l-4.5 5" stroke="#eee" stroke-width="1.3"/></svg><div class="a" style="left:584px;top:357px;width:186px;height:13px;background:#9c9c9c;border-bottom:1px solid #7a7a7a"></div><div class="a" style="left:585px;top:357px;width:28px;height:13px;background:#d8d8d8;border-right:1px solid #8a8a8a"></div><div class="t" style="left:589px;top:358px;font-size:10px;line-height:12px;color:#333;letter-spacing:0px">图层</div><div class="a" style="left:613px;top:357px;width:28px;height:12px;background:#b4b4b4;border-right:1px solid #8a8a8a"></div><div class="t" style="left:617px;top:358px;font-size:10px;line-height:12px;color:#444;letter-spacing:0px">通道</div><div class="a" style="left:641px;top:357px;width:28px;height:12px;background:#b4b4b4;border-right:1px solid #8a8a8a"></div><div class="t" style="left:645px;top:358px;font-size:10px;line-height:12px;color:#444;letter-spacing:0px">路径</div><svg class="a" style="left:755px;top:359px" width="13" height="9"><path d="M0.5 3.5h4l-2 2.5z" fill="#222"/><path d="M6 1.5h6M6 4.5h6M6 7.5h6" stroke="#333" stroke-width="1.2"/></svg><div class="a" style="left:584px;top:370px;width:186px;height:132px;background:#d6d6d6;"></div><div class="in" style="left:587px;top:373px;width:91px;height:16px;line-height:14px;font-size:10px;padding-left:5px">正常</div><div class="a" style="left:665px;top:375px;width:12px;height:12px;background:linear-gradient(#f0f0f0,#cccccc);border:1px solid #777"></div><div class="t" style="left:667px;top:377px;font-size:7px;line-height:8px;color:#111">&#9660;</div><div class="t" style="left:681px;top:375px;font-size:10px;line-height:12px;color:#222;letter-spacing:-0.6px">不透明度:</div><div class="in" style="left:722px;top:373px;width:33px;height:14px;line-height:12px;font-size:9.5px;border-color:#333">100%</div><div class="a" style="left:755px;top:373px;width:11px;height:14px;background:linear-gradient(#f4f4f4,#d0d0d0);border:1px solid #333"></div><div class="t" style="left:757px;top:375px;font-size:9px;line-height:9px;color:#111">&#9656;</div><div class="t" style="left:590px;top:396px;font-size:10px;line-height:12px;color:#222;letter-spacing:-0.3px">锁定:</div><div class="a" style="left:615px;top:397px;width:8px;height:8px;background:#f4f4f4;border:1px solid #aaa"></div><svg class="a" style="left:625px;top:395px" width="42" height="12"><path d="M2 11 L10 2" stroke="#999" stroke-width="1.5"/><path d="M15 6h9M19.5 1.5v9" stroke="#333" stroke-width="1.2"/><rect x="30" y="5" width="7" height="6" fill="#333"/><path d="M31.5 5v-2a2 2 0 0 1 4 0v2" fill="none" stroke="#333"/></svg><div class="t" style="left:700px;top:396px;font-size:10px;line-height:12px;color:#222;letter-spacing:-0.3px">填充:</div><div class="in" style="left:722px;top:394px;width:33px;height:13px;line-height:11px;font-size:9.5px;border-color:#333">100%</div><div class="a" style="left:755px;top:394px;width:11px;height:13px;background:linear-gradient(#f4f4f4,#d0d0d0);border:1px solid #333"></div><div class="t" style="left:757px;top:396px;font-size:9px;line-height:9px;color:#111">&#9656;</div><div class="a" style="left:585px;top:410px;width:171px;height:78px;background:#d8d8d8;border-top:1px solid #999"></div><div class="a" style="left:602px;top:411px;width:154px;height:29px;background:#0c2470;"></div><div class="a" style="left:585px;top:440px;width:171px;height:1px;background:#999;"></div><div class="a" style="left:585px;top:469px;width:171px;height:1px;background:#999;"></div><div class="a" style="left:602px;top:411px;width:1px;height:77px;background:#aaa;"></div><svg class="a" style="left:588px;top:421px" width="12" height="8"><path d="M0.5 4 Q6 -1 11.5 4 Q6 9 0.5 4Z" fill="#9a9a9a" stroke="#333"/><circle cx="6" cy="4" r="2.2" fill="#111"/></svg><svg class="a" style="left:588px;top:451px" width="12" height="8"><path d="M0.5 4 Q6 -1 11.5 4 Q6 9 0.5 4Z" fill="#9a9a9a" stroke="#333"/><circle cx="6" cy="4" r="2.2" fill="#111"/></svg><svg class="a" style="left:588px;top:480px" width="12" height="8"><path d="M0.5 4 Q6 -1 11.5 4 Q6 9 0.5 4Z" fill="#9a9a9a" stroke="#333"/><circle cx="6" cy="4" r="2.2" fill="#111"/></svg><div class="a" style="left:605px;top:413px;width:24px;height:25px;background:#fff;border:1px solid #888"></div><svg class="a" style="left:606px;top:414px" width="22" height="23"><circle cx="8" cy="8" r="5" fill="#ccc" stroke="#555"/><rect x="11" y="9" width="8" height="6" fill="#666"/><path d="M2 19h18" stroke="#555" stroke-width="1.5"/><rect x="9" y="17" width="3" height="4" fill="#555"/></svg><div class="a" style="left:632px;top:418px;width:4px;height:12px;background:none;border:1px solid #ccc;border-radius:2px"></div><div class="a" style="left:640px;top:413px;width:19px;height:25px;background:#fff;border:1px solid #888"></div><div class="t" style="left:663px;top:420px;font-size:10px;line-height:12px;color:#fff;letter-spacing:-0.2px">照片滤镜 1</div><div class="a" style="left:605px;top:443px;width:18px;height:24px;background:#838383;border:1px solid #555"></div><div class="t" style="left:628px;top:450px;font-size:10px;line-height:12px;color:#222;letter-spacing:-0.2px">图层 1</div><div class="a" style="left:605px;top:472px;width:18px;height:16px;background:#aaa;border:1px solid #555"></div><div class="t" style="left:628px;top:479px;font-size:10px;line-height:12px;color:#222;letter-spacing:-0.2px">背景 副本</div><div class="a" style="left:756px;top:411px;width:11px;height:77px;background:#e6e6e6;border-left:1px solid #bbb"></div><div class="a" style="left:756px;top:411px;width:11px;height:11px;background:linear-gradient(#f4f4f4,#d4d4d4);border:1px solid #888"></div><div class="t" style="left:758px;top:412px;font-size:7px;line-height:8px;color:#111">&#9652;</div><div class="a" style="left:757px;top:422px;width:10px;height:33px;background:linear-gradient(90deg,#ddd,#c4c4c4);border:1px solid #999"></div><div class="a" style="left:756px;top:477px;width:11px;height:11px;background:linear-gradient(#f4f4f4,#d4d4d4);border:1px solid #888"></div><div class="t" style="left:758px;top:479px;font-size:7px;line-height:8px;color:#111">&#9662;</div><div class="a" style="left:585px;top:488px;width:185px;height:15px;background:#d2d2d2;border-top:1px solid #aaa"></div><svg class="a" style="left:614px;top:489px" width="150" height="12"><ellipse cx="6" cy="6" rx="5" ry="2.5" fill="none" stroke="#888"/><text x="24" y="10" font-size="10" font-style="italic" font-weight="bold" fill="#333" font-family="Liberation Serif">fx</text><rect x="46" y="2" width="9" height="8" fill="#fff" stroke="#333"/><circle cx="50.5" cy="6" r="2.5" fill="#555"/><circle cx="72" cy="6" r="4" fill="#555" stroke="#333"/><path d="M72 2a4 4 0 0 1 0 8z" fill="#eee"/><path d="M89 3h7v7h-7z" fill="#eee" stroke="#333"/><path d="M110 3h7v7h-7z" fill="#eee" stroke="#333"/><path d="M130 2h6v2h-6zM131 4h4v7h-4z" fill="#ddd" stroke="#333" stroke-width="0.8"/></svg><div class="a" style="left:583px;top:503px;width:188px;height:1px;background:#111;"></div><div class="a" style="left:583px;top:348px;width:1px;height:156px;background:#222;"></div><div class="a" style="left:584px;top:504px;width:186px;height:69px;background:#d4d4d4;"></div><div class="a" style="left:587px;top:505px;width:14px;height:14px;background:#e2e2e2;border:1px solid #aaa"></div><div class="a" style="left:603px;top:505px;width:1px;height:15px;background:#aaa;"></div><svg class="a" style="left:608px;top:506px" width="12" height="13"><path d="M1 1h7l3 3v8h-10z" fill="#f4f4f4" stroke="#333"/><path d="M3 5h6M3 8h6" stroke="#555"/></svg><div class="a" style="left:584px;top:519px;width:184px;height:1px;background:#b8b8b8;"></div><div class="a" style="left:587px;top:520px;width:14px;height:14px;background:#e2e2e2;border:1px solid #aaa"></div><div class="a" style="left:603px;top:520px;width:1px;height:15px;background:#aaa;"></div><svg class="a" style="left:608px;top:521px" width="12" height="13"><path d="M1 1h7l3 3v8h-10z" fill="#f4f4f4" stroke="#333"/><path d="M3 5h6M3 8h6" stroke="#555"/></svg><div class="a" style="left:584px;top:534px;width:184px;height:1px;background:#b8b8b8;"></div><div class="a" style="left:587px;top:535px;width:14px;height:14px;background:#e2e2e2;border:1px solid #aaa"></div><div class="a" style="left:603px;top:535px;width:1px;height:15px;background:#aaa;"></div><svg class="a" style="left:608px;top:536px" width="12" height="13"><path d="M1 1h7l3 3v8h-10z" fill="#f4f4f4" stroke="#333"/><path d="M3 5h6M3 8h6" stroke="#555"/></svg><div class="a" style="left:584px;top:549px;width:184px;height:1px;background:#b8b8b8;"></div><div class="a" style="left:587px;top:550px;width:14px;height:14px;background:#e2e2e2;border:1px solid #aaa"></div><div class="a" style="left:603px;top:550px;width:1px;height:15px;background:#aaa;"></div><svg class="a" style="left:608px;top:551px" width="12" height="13"><path d="M1 1h7l3 3v8h-10z" fill="#f4f4f4" stroke="#333"/><path d="M3 5h6M3 8h6" stroke="#555"/></svg><div class="a" style="left:584px;top:564px;width:184px;height:1px;background:#b8b8b8;"></div><div class="t" style="left:625px;top:507px;font-size:10px;line-height:12px;color:#222;letter-spacing:-0.2px">复制图层</div><div class="a" style="left:750px;top:506px;width:12px;height:12px;background:#e6e6e6;border:1px solid #999"></div><svg class="a" style="left:600px;top:24px;opacity:0.6" width="150" height="50"><g fill="#8fb0a0"><ellipse cx="20" cy="6" rx="2.4" ry="3.6" transform="rotate(0 20 6)"/><ellipse cx="13" cy="9" rx="2.4" ry="3.6" transform="rotate(-40 13 9)"/><ellipse cx="27" cy="9" rx="2.4" ry="3.6" transform="rotate(40 27 9)"/><ellipse cx="9" cy="15" rx="2.4" ry="3.6" transform="rotate(-60 9 15)"/><ellipse cx="31" cy="15" rx="2.4" ry="3.6" transform="rotate(60 31 15)"/><ellipse cx="16" cy="14" rx="2.4" ry="3.6" transform="rotate(-20 16 14)"/><ellipse cx="24" cy="14" rx="2.4" ry="3.6" transform="rotate(20 24 14)"/><ellipse cx="6" cy="22" rx="2.4" ry="3.6" transform="rotate(-70 6 22)"/><ellipse cx="34" cy="22" rx="2.4" ry="3.6" transform="rotate(70 34 22)"/><ellipse cx="12" cy="21" rx="2.4" ry="3.6" transform="rotate(-40 12 21)"/><ellipse cx="28" cy="21" rx="2.4" ry="3.6" transform="rotate(40 28 21)"/><ellipse cx="19" cy="20" rx="2.4" ry="3.6" transform="rotate(0 19 20)"/><ellipse cx="9" cy="29" rx="2.4" ry="3.6" transform="rotate(-50 9 29)"/><ellipse cx="31" cy="29" rx="2.4" ry="3.6" transform="rotate(50 31 29)"/><ellipse cx="15" cy="27" rx="2.4" ry="3.6" transform="rotate(-30 15 27)"/><ellipse cx="25" cy="27" rx="2.4" ry="3.6" transform="rotate(30 25 27)"/><ellipse cx="5" cy="33" rx="2.4" ry="3.6" transform="rotate(-80 5 33)"/><ellipse cx="35" cy="33" rx="2.4" ry="3.6" transform="rotate(80 35 33)"/><rect x="18.5" y="22" width="3" height="28"/><path d="M20 36 L10 28 M20 32 L30 24" stroke="#8fb0a0" stroke-width="1.5"/></g></svg><div class="t" style="left:647px;top:33px;font-size:17px;line-height:20px;font-weight:bold;color:#ececec;letter-spacing:-0.5px;text-shadow:1px 1px 1px rgba(0,0,0,.14),-1px -1px 1px rgba(0,0,0,.08);transform-origin:0 0;transform:scaleX(1.0)">泰网网学院</div><div class="t" style="left:648px;top:56px;font-size:12.3px;line-height:14px;color:#d0d0d0;letter-spacing:0px;text-shadow:1px 1px 1px rgba(0,0,0,.18)">Teatube College</div><div class="t" style="left:618px;top:520px;font-size:19px;line-height:20px;font-weight:bold;color:#2a7a2a;letter-spacing:-1.2px;-webkit-text-stroke:0.6px #1a5a1a;text-shadow:0 0 2px #fff,0 0 2px #fff;transform-origin:0 0;transform:scaleX(1.064)">随时下免费资源网</div><div class="t" style="left:619px;top:539px;font-size:19px;line-height:19px;font-weight:bold;color:#111;letter-spacing:-0.6px;-webkit-text-stroke:0.5px #111;text-shadow:0 0 2px #fff,0 0 2px #fff;transform-origin:0 0;transform:scaleX(0.89)">www.SuiShiXia.com</div><div class="t" style="left:616px;top:557px;font-size:17px;line-height:18px;font-weight:bold;color:#c82828;letter-spacing:-1px;-webkit-text-stroke:0.5px #b01818;font-family:'Liberation Serif',serif;text-shadow:0 0 2px #fff,0 0 2px #fff;transform-origin:0 0;transform:scaleX(1.109)">数万 网课 教程 资源</div>
<div class="a" style="left:0px;top:577px;width:773px;height:2px;background:#141414;"></div>
<div class="a" style="left:2px;top:573px;width:771px;height:4px;background:#dcdcdc;"></div>
</body></html>
